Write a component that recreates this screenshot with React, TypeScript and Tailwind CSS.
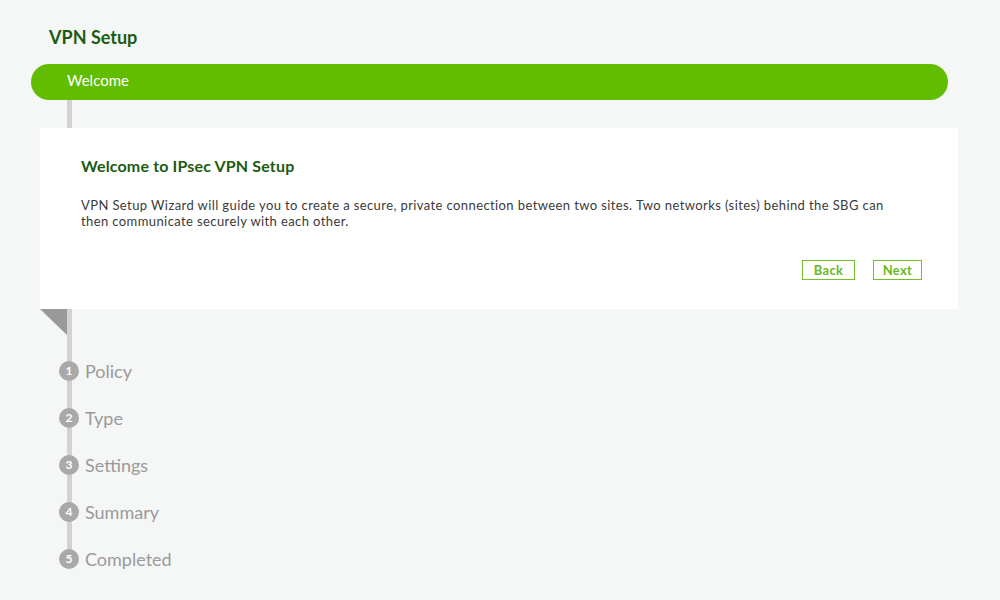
const steps = ["Policy", "Type", "Settings", "Summary", "Completed"];

export default function App() {
  return (
    <div className="w-[1000px] h-[600px] overflow-hidden bg-[#f5f6f6] font-['Lato',sans-serif]">
      <h1 className="pt-[26px] pl-[49px] h-[64px] text-[18px] font-bold text-[#1b5c10] leading-[22px]">
        VPN Setup
      </h1>

      <div className="ml-[31px] w-[917px] h-[36px] rounded-full bg-[#62bd00] flex items-center pl-[36px] pb-[3px]">
        <span className="text-white text-[15px]">Welcome</span>
      </div>

      <div className="ml-[67px] w-[5px] h-[28px] bg-[#d2d2d2]" />

      <div className="ml-[40px] w-[918px] h-[181px] bg-white pt-[29px] pl-[41px] pr-[36px]">
        <h2 className="text-[16px] font-bold tracking-[0.15px] text-[#1b5c10] leading-[18px]">
          Welcome to IPsec VPN Setup
        </h2>
        <p className="mt-[22px] text-[13px] tracking-[0.4px] leading-[16px] text-[#3a3a3a] whitespace-nowrap">
          VPN Setup Wizard will guide you to create a secure, private connection between two sites. Two networks
          (sites) behind the SBG can
          <br />
          then communicate securely with each other.
        </p>
        <div className="mt-[31px] flex justify-end gap-[18px]">
          <button className="w-[53px] h-[20px] border border-[#72bf2a] text-[#6ab81f] text-[13px] tracking-[0.3px] font-bold leading-none">
            Back
          </button>
          <button className="w-[49px] h-[20px] border border-[#72bf2a] text-[#6ab81f] text-[13px] tracking-[0.3px] font-bold leading-none">
            Next
          </button>
        </div>
      </div>

      <div className="ml-[67px] w-[300px] border-l-[5px] border-[#d2d2d2] h-[243px]">
        <svg width="27" height="26" viewBox="0 0 27 26" className="-ml-[32px] block">
          <polygon points="0,0 27,0 27,26" fill="#999999" />
        </svg>
        <div className="mt-[26px] flex flex-col gap-[27px]">
          {steps.map((s, i) => (
            <div key={s} className="flex items-center h-[20px] -ml-[13px]">
              <span className="w-[20px] h-[20px] rounded-full bg-[#a9a9a9] text-white text-[12px] font-bold flex items-center justify-center">
                {i + 1}
              </span>
              <span className="ml-[6px] text-[18px] text-[#9a9a9a]">{s}</span>
            </div>
          ))}
        </div>
      </div>
    </div>
  );
}
